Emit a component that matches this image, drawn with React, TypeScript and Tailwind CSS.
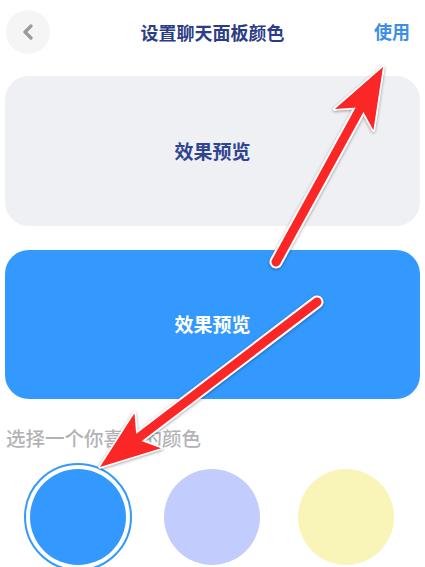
import React from "react";

const cjk = { fontFamily: '"Noto Sans CJK SC", "Noto Sans", sans-serif' };

function Arrow({ x1, y1, x2, y2 }: { x1: number; y1: number; x2: number; y2: number }) {
  const dx = x2 - x1;
  const dy = y2 - y1;
  const len = Math.hypot(dx, dy);
  const ux = dx / len;
  const uy = dy / len;
  const px = -uy;
  const py = ux;
  const headLen = 60;
  const headHalf = 22;
  const notch = 14;
  const bx = x2 - ux * headLen;
  const by = y2 - uy * headLen;
  const nx = x2 - ux * (headLen - notch);
  const ny = y2 - uy * (headLen - notch);
  const head = [
    [x2, y2],
    [bx + px * headHalf, by + py * headHalf],
    [nx, ny],
    [bx - px * headHalf, by - py * headHalf],
  ]
    .map((p) => p.join(","))
    .join(" ");
  return (
    <g>
      <line x1={x1} y1={y1} x2={nx} y2={ny} stroke="#ffffff" strokeWidth={13} strokeLinecap="round" />
      <polygon points={head} fill="#ffffff" stroke="#ffffff" strokeWidth={3.5} strokeLinejoin="round" />
      <line x1={x1} y1={y1} x2={nx + ux * 4} y2={ny + uy * 4} stroke="#fb2626" strokeWidth={9} strokeLinecap="round" />
      <polygon points={head} fill="#fb2626" />
    </g>
  );
}

export default function App() {
  return (
    <div className="relative w-[425px] h-[567px] overflow-hidden bg-white" style={cjk}>
      {/* header */}
      <div className="relative h-[64px] flex items-center justify-center">
        <button className="absolute left-[6px] top-[10px] w-[44px] h-[44px] rounded-full bg-[#f5f5f6] flex items-center justify-center">
          <svg width="14" height="16" viewBox="0 0 14 16">
            <path d="M10 2 L4 8 L10 14" fill="none" stroke="#9a9a9a" strokeWidth="3.2" strokeLinecap="round" strokeLinejoin="round" />
          </svg>
        </button>
        <div className="text-[18px] font-semibold text-[#2c3d86] leading-none">设置聊天面板颜色</div>
        <div className="absolute right-[15px] top-[22px] text-[18px] font-semibold text-[#3b8fe8] leading-none">使用</div>
      </div>

      {/* light preview */}
      <div className="mx-[5px] mt-[12px] h-[150px] rounded-[24px] bg-[#eff0f4] flex items-center justify-center">
        <span className="text-[19px] font-semibold text-[#2f4592]">效果预览</span>
      </div>

      {/* dark preview */}
      <div className="mx-[5px] mt-[24px] h-[149px] rounded-[24px] bg-[#3399ff] flex items-center justify-center">
        <span className="text-[19px] font-semibold text-white">效果预览</span>
      </div>

      <div className="mt-[27px] pl-[6px] text-[19.5px] font-medium text-[#b3b3b6] leading-[24px]">选择一个你喜欢的颜色</div>

      <div className="mt-[13px] flex items-center pl-[24px] gap-[26px]">
        <div className="w-[108px] h-[108px] rounded-full border-2 border-[#3399ff] p-[4px]">
          <div className="w-full h-full rounded-full bg-[#3399ff]" />
        </div>
        <div className="w-[108px] flex justify-center">
          <div className="w-[96px] h-[96px] rounded-full bg-[#c2cdfd]" />
        </div>
        <div className="w-[108px] flex justify-center">
          <div className="w-[96px] h-[96px] rounded-full bg-[#f9f4b8]" />
        </div>
      </div>

      {/* callout arrows */}
      <svg className="absolute inset-0 pointer-events-none" width="425" height="567" style={{ filter: "drop-shadow(0 1px 1.5px rgba(0,0,0,0.35))" }}>
        <Arrow x1={276} y1={262} x2={383} y2={67} />
        <Arrow x1={317} y1={302} x2={100} y2={467} />
      </svg>
    </div>
  );
}
